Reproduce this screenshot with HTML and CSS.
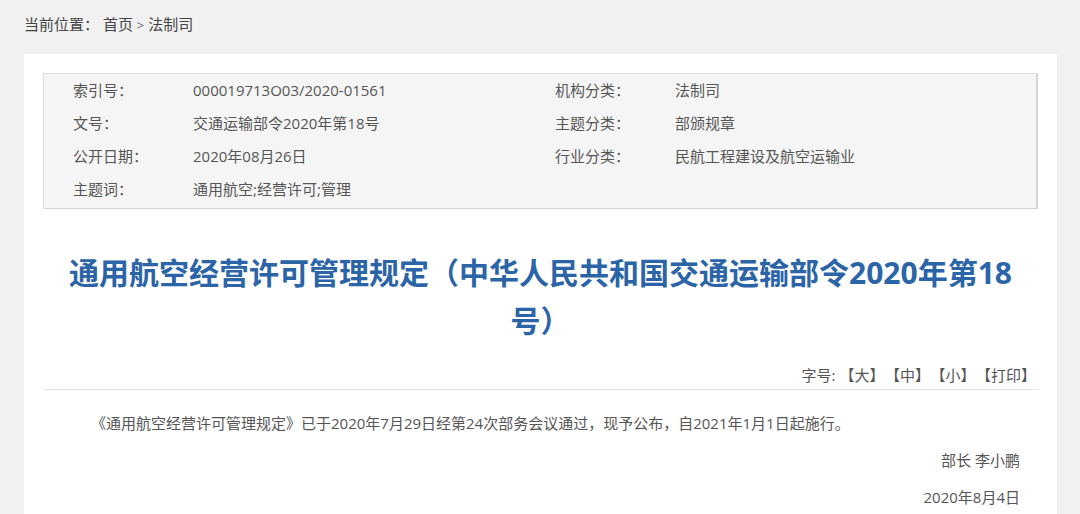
FILE: index.html
```html
<!DOCTYPE html>
<html lang="zh-CN">
<head>
<meta charset="utf-8">
<title>通用航空经营许可管理规定</title>
<link rel="stylesheet" href="styles.css">
</head>
<body>
<div class="page">
  <div class="crumb">当前位置： <a class="crumb-link">首页</a> <span class="gt">&gt;</span> <a class="crumb-link">法制司</a></div>
  <div class="card">
    <div class="meta">
      <span class="k">索引号：</span><span class="v">000019713O03/2020-01561</span>
      <span class="k">机构分类：</span><span class="v">法制司</span>
      <span class="k">文号：</span><span class="v">交通运输部令2020年第18号</span>
      <span class="k">主题分类：</span><span class="v">部颁规章</span>
      <span class="k">公开日期：</span><span class="v">2020年08月26日</span>
      <span class="k">行业分类：</span><span class="v">民航工程建设及航空运输业</span>
      <span class="k">主题词：</span><span class="v">通用航空;经营许可;管理</span>
      <span class="k"></span><span class="v"></span>
    </div>
    <h1 class="title">通用航空经营许可管理规定（中华人民共和国交通运输部令2020年第18号）</h1>
    <div class="tools">字号:<a class="tool">【大】</a><a class="tool">【中】</a><a class="tool">【小】</a><a class="tool">【打印】</a></div>
    <div class="content">
      <p class="para">《通用航空经营许可管理规定》已于2020年7月29日经第24次部务会议通过，现予公布，自2021年1月1日起施行。</p>
      <p class="sign">部长 李小鹏</p>
      <p class="sign">2020年8月4日</p>
    </div>
  </div>
</div>
</body>
</html>
```

FILE: styles.css
```css
html, body {
  margin: 0;
  padding: 0;
  background: #f1f1f1;
  font-family: "Open Sans", "Noto Sans CJK SC", sans-serif;
  font-size: 15px;
  color: #555;
  overflow: hidden;
}
.page {
  padding: 14px 23px 0 24px;
}
.crumb {
  line-height: 20px;
  color: #444;
  white-space: nowrap;
}
.crumb-link {
  color: #444;
  text-decoration: none;
}
.gt {
  font-size: 13px;
  color: #666;
}
.card {
  margin-top: 19px;
  background: #fff;
  padding: 19px 19px 40px;
  min-height: 500px;
}
.meta {
  display: grid;
  grid-template-columns: 120px 362px 120px 1fr;
  grid-auto-rows: 33px;
  align-items: center;
  padding: 0 0 2px 29px;
  background: #f5f5f6;
  border: 1px solid #dcdcdc;
  border-right: 2px solid #d3d3d3;
  border-bottom: 1px solid #d6d6d6;
  color: #555;
  white-space: nowrap;
}
.k, .v {
  line-height: 33px;
}
.title {
  margin: 40px 0 0;
  padding: 0 20px;
  text-align: center;
  font-size: 30px;
  line-height: 48px;
  font-weight: 700;
  color: #2c65a7;
}
.tools {
  margin-top: 19px;
  line-height: 22px;
  padding: 0 2px 3px 0;
  text-align: right;
  border-bottom: 1px solid #e4e4e4;
  color: #555;
  white-space: nowrap;
}
.tool {
  color: #555;
  text-decoration: none;
  margin-left: 8px;
}
.tool:first-child {
  margin-left: 4px;
}
.content {
  padding: 15px 18px 0;
}
.para {
  margin: 0;
  line-height: 37px;
  text-indent: 30px;
  color: #555;
}
.sign {
  margin: 0;
  line-height: 37px;
  text-align: right;
  color: #555;
}
```
